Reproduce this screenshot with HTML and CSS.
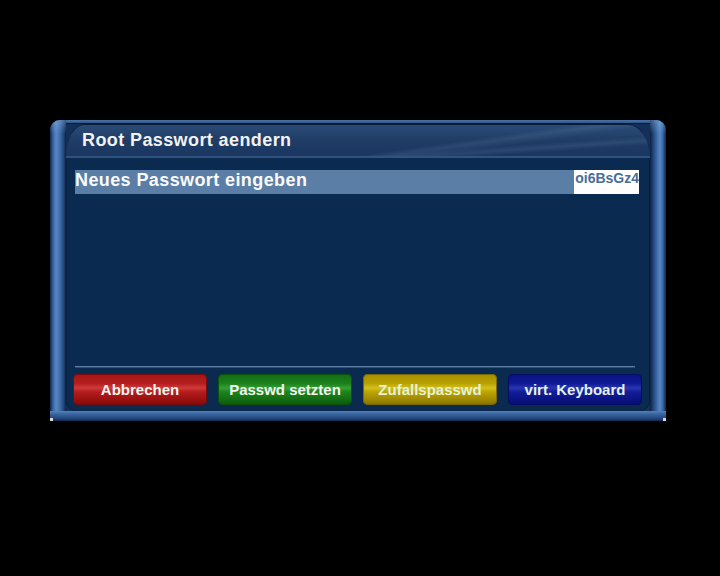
FILE: index.html
```html
<!DOCTYPE html>
<html>
<head>
<meta charset="utf-8">
<link rel="stylesheet" href="styles.css">
</head>
<body>
<div class="frame">
  <div class="main">
    <div class="pillar pillar-left"></div>
    <div class="center">
      <div class="topband"></div>
      <div class="header"><span class="title">Root Passwort aendern</span></div>
      <div class="content">
        <div class="row">
          <span class="row-label">Neues Passwort eingeben</span>
          <span class="row-value">oi6BsGz4</span>
        </div>
        <div class="spacer"></div>
        <div class="separator"></div>
        <div class="buttons">
          <div class="btn btn-red">Abbrechen</div>
          <div class="btn btn-green">Passwd setzten</div>
          <div class="btn btn-yellow">Zufallspasswd</div>
          <div class="btn btn-blue">virt. Keyboard</div>
        </div>
      </div>
    </div>
    <div class="pillar pillar-right"></div>
  </div>
  <div class="bottom"></div>
  <span class="corner corner-left"></span>
  <span class="corner corner-right"></span>
</div>
</body>
</html>
```

FILE: styles.css
```css
html, body {
  margin: 0;
  padding: 0;
  background: #000;
  width: 720px;
  height: 576px;
  overflow: hidden;
  font-family: "Liberation Sans", Arial, sans-serif;
}

.frame {
  position: relative;
  margin: 120px 0 0 50px;
  width: 616px;
  display: flex;
  flex-direction: column;
  border-radius: 10px 10px 2px 2px;
  background: #2f5789;
}

.main {
  display: flex;
  height: 291px;
}

.pillar {
  width: 16px;
  flex: none;
}

.pillar-left {
  border-radius: 10px 0 0 0;
  background:
    linear-gradient(180deg, rgba(150,190,235,0.35) 0, rgba(150,190,235,0) 14px),
    linear-gradient(90deg, #10254a 0, #3563a0 3px, #5788c4 6px, #3f6ca8 10px, #1f4275 14px, #0c2040 16px);
}

.pillar-right {
  border-radius: 0 10px 0 0;
  background:
    linear-gradient(180deg, rgba(150,190,235,0.35) 0, rgba(150,190,235,0) 14px),
    linear-gradient(90deg, #0c2040 0, #1f4275 3px, #3f6ca8 7px, #5788c4 10px, #3563a0 13px, #10254a 16px);
}

.center {
  flex: 1;
  display: flex;
  flex-direction: column;
  background: #14305a;
}

.topband {
  height: 3px;
  background: linear-gradient(180deg, #4a74a8 0, #2e5588 100%);
  border-bottom: 1px solid #0a1a34;
}

.header {
  height: 33px;
  display: flex;
  align-items: center;
  border-radius: 18px 22px 0 0 / 33px 33px 0 0;
  border-top: 1px solid #0c1c36;
  background:
    linear-gradient(172deg, transparent 0 62%, rgba(170,200,235,0.10) 66%, transparent 72%),
    linear-gradient(176deg, transparent 0 70%, rgba(170,200,235,0.10) 76%, transparent 82%),
    linear-gradient(180deg, #2b4b76 0, #1f3d66 45%, #193560 100%);
  box-shadow: inset 0 -2px 0 #2f527e;
}

.title {
  padding-left: 16px;
  margin-top: -3px;
  color: #f2f2f2;
  font-weight: bold;
  font-size: 18px;
  letter-spacing: 0.4px;
}

.content {
  flex: 1;
  display: flex;
  flex-direction: column;
  background: #0a2a4f;
  padding: 12px 8px 6px 7px;
  border-radius: 0 0 10px 10px;
  box-shadow: inset 1px 0 0 #06203f, inset -1px 0 0 #06203f;
}

.row {
  height: 24px;
  margin: 0 3px 0 2px;
  display: flex;
  justify-content: space-between;
  align-items: flex-start;
  background: #5a7ea6;
}

.row-label {
  color: #fafafa;
  font-weight: bold;
  font-size: 18px;
  line-height: 20px;
  letter-spacing: 0.4px;
}

.row-value {
  align-self: stretch;
  background: #fff;
  color: #4a6d98;
  font-weight: bold;
  font-size: 14px;
  line-height: 17px;
  padding-left: 1px;
}

.spacer {
  flex: 1;
}

.separator {
  height: 2px;
  margin: 0 7px 0 2px;
  background: linear-gradient(180deg, #5f7ea2 0 1px, #2c4a70 1px 2px);
}

.buttons {
  display: flex;
  gap: 11px;
  margin-top: 6px;
}

.btn {
  width: 134px;
  height: 31px;
  border-radius: 5px;
  display: flex;
  align-items: center;
  justify-content: center;
  color: #f2f6ee;
  font-weight: bold;
  font-size: 15px;
  padding-bottom: 1px;
  box-sizing: border-box;
}

.btn-red {
  background: linear-gradient(180deg, #a41616 0, #b51d1d 30%, #cf3a3a 45%, #b41c1c 58%, #961010 85%, #7e0a0a 100%);
  box-shadow: inset 0 0 0 1px #7a0a0a;
}

.btn-green {
  background: linear-gradient(180deg, #136d13 0, #1b7f1b 30%, #35a035 45%, #1d821d 58%, #126a12 85%, #0c560c 100%);
  box-shadow: inset 0 0 0 1px #0b520b;
}

.btn-yellow {
  background: linear-gradient(180deg, #a68e00 0, #b8a000 30%, #d3c11c 45%, #bca400 58%, #9c8500 85%, #846f00 100%);
  box-shadow: inset 0 0 0 1px #7c6800;
  color: #e4f2da;
}

.btn-blue {
  background: linear-gradient(180deg, #0a1283 0, #0f1894 30%, #2a36b0 45%, #121c98 58%, #0a127f 85%, #070d6a 100%);
  box-shadow: inset 0 0 0 1px #060c60;
  color: #e4f2ec;
}

.bottom {
  height: 10px;
  background: linear-gradient(180deg, #5482ba 0, #3a66a0 30%, #244a7e 70%, #112a50 100%);
  border-radius: 0 0 3px 3px;
}

.corner {
  position: absolute;
  bottom: 0;
  width: 3px;
  height: 3px;
  background: #d8d8d8;
}

.corner-left {
  left: 0;
}

.corner-right {
  right: 0;
}
```
